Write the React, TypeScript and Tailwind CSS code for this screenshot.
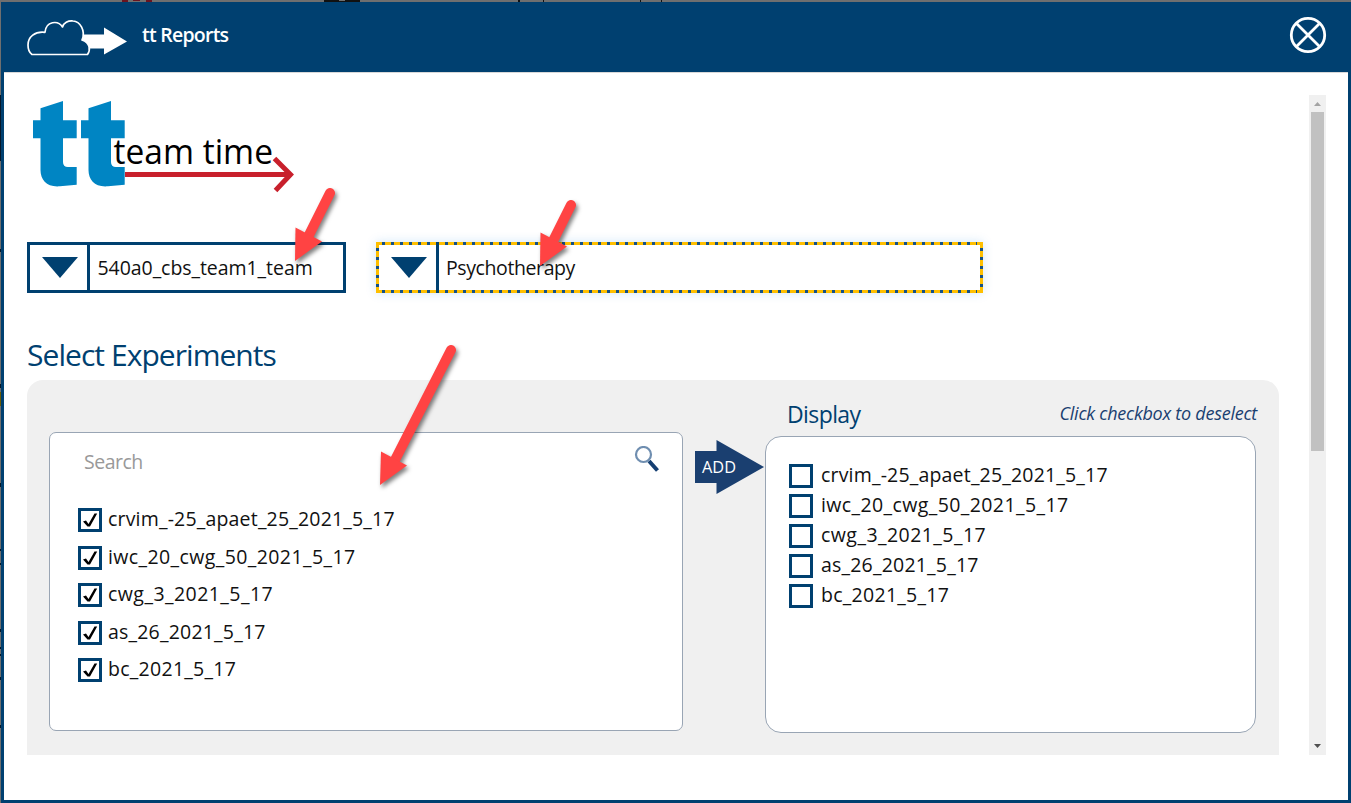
import React from "react";

const experiments = [
  { name: "crvim_-25_apaet_25_2021_5_17", track: "tracking-[0.18px]" },
  { name: "iwc_20_cwg_50_2021_5_17", track: "tracking-[0.4px]" },
  { name: "cwg_3_2021_5_17", track: "tracking-[0.45px]" },
  { name: "as_26_2021_5_17", track: "tracking-[0.2px]" },
  { name: "bc_2021_5_17", track: "tracking-[0.27px]" },
];

function CloudArrow() {
  return (
    <svg className="block h-[38px] w-[101px] shrink-0" viewBox="26 19 101 38">
      <path d="M83 34.500H104V27.500L127 41.500L104 54.500V48.500H83Z" fill="#fff" />
      <path
        d="M32 54.500H87.500C90.500 50 90.500 43 82 40C86 31 80 21.200 73 21C68 20.500 63.500 23 62.500 27C58 20 46 21 45 32.300C35 31 28 37 28 45C28 49 29 52.500 32 54.500Z"
        fill="#004070"
        stroke="#fff"
        strokeWidth="1.7"
        strokeLinejoin="round"
      />
    </svg>
  );
}

function TeamTimeLogo() {
  const t =
    "M40.500 108.300L63 101V120.300H76.700V138.300H63V162Q63 167 68 167H76.700V184.800L60 186.300C47 187.500 40.500 180 40.500 170V138.300H33V120.300H40.500Z";
  return (
    <svg className="block h-[94px] w-[264px]" viewBox="32 99 264 94">
      <path d={t} fill="#0085c3" />
      <path d={t} fill="#0085c3" transform="translate(48 0)" />
      <path d="M125 174.500H290M274.500 158.500L290.500 174.500L275.500 190.500" fill="none" stroke="#c8202c" strokeWidth="5" />
      <text x="113.500" y="163.500" fontSize="35.500" textLength="159.500" lengthAdjust="spacingAndGlyphs" fontFamily="Open Sans, sans-serif">
        team time
      </text>
    </svg>
  );
}

function Triangle() {
  return (
    <svg className="block h-[21px] w-9" viewBox="0 0 36 21">
      <path d="M0 0H36L18 21Z" fill="#004070" />
    </svg>
  );
}

function Box({ checked }: { checked?: boolean }) {
  return (
    <span className="block size-6 shrink-0 border-[3px] border-[#004070] bg-white">
      {checked && (
        <svg className="block size-[18px]" viewBox="0 0 18 18">
          <path d="M2 10.500L5 9.500L7.500 13L13.500 2.500H16.200L9 15.500H6.500Z" fill="#000" />
        </svg>
      )}
    </span>
  );
}

function RedArrow({ className, w, h, body, head }: { className: string; w: number; h: number; body: string; head: string }) {
  return (
    <svg className={className} viewBox={`0 0 ${w} ${h}`}>
      <g className="drop-shadow-[2px_3px_2px_rgba(0,0,0,0.5)]">
        <path d={body} stroke="#ff4343" strokeWidth="10" strokeLinecap="round" />
        <path d={head} fill="#ff4343" />
      </g>
    </svg>
  );
}

function DimmedPage() {
  return (
    <svg className="absolute inset-0 h-[803px] w-[1351px]" viewBox="0 0 1351 803">
      <path d="M122 0H128V2H122ZM133 0H140V1H133ZM146 0H152V2H146Z" fill="#6a1420" />
      <path d="M324 0H339V1H345V0H360V2H324ZM518 0H520V2H518ZM543 0H544V2H543ZM640 0H641V2H640ZM661 0H662V2H661Z" fill="#111" />
      <path d="M0 95H1V161H0ZM0 249H1V252H0ZM0 384H1V388H0ZM0 483H1V487H0ZM0 549H1V551H0ZM0 563H1V565H0ZM0 629H1V632H0ZM0 647H1V649H0ZM0 654H1V656H0ZM0 677H1V680H0ZM0 725H1V728H0Z" fill="#06182a" />
      <path d="M0 392H1V406H0Z" fill="#6b5a00" />
    </svg>
  );
}

export default function App() {
  return (
    <div className="relative flex h-[803px] w-[1351px] flex-col overflow-hidden bg-[#6f6f6f] pt-[2px] pl-px font-['Open_Sans',sans-serif] text-[19.500px] text-[#111]">
      <DimmedPage />
      <div className="relative flex h-[801px] w-[1350px] flex-col border-[3px] border-t-0 border-[#004070] bg-white">
        <header className="flex h-[70px] shrink-0 bg-[#004070] pt-[17px] pl-[22px]">
          <CloudArrow />
          <h1 className="ml-[15px] pt-px text-[19.500px] leading-[30px] font-semibold tracking-[-0.75px] text-white">tt Reports</h1>
          <svg className="mr-[21px] -mt-[3px] ml-auto size-[38px]" viewBox="0 0 38 38" fill="none" stroke="#fff" strokeWidth="2.800">
            <circle cx="19" cy="19" r="16.700" />
            <path d="M7.500 7.500L30.500 30.500M30.500 7.500L7.500 30.500" />
          </svg>
        </header>
        <div className="flex h-[683px] shrink-0 border-t border-[#d8d8d8] pl-[23px]">
          <main className="w-[1252px] pt-[26px]">
            <div className="pl-[5px]">
              <TeamTimeLogo />
            </div>
            <div className="mt-[49px] flex gap-[30px]">
              <div className="flex h-[51px] w-[319px] border-[3px] border-[#004070]">
                <div className="flex w-[60px] justify-center border-r-[3px] border-[#004070] pt-3 pl-[3px]">
                  <Triangle />
                </div>
                <span className="pl-[7.500px] leading-[46px] tracking-[-0.06px]">540a0_cbs_team1_team</span>
              </div>
              <div className="relative flex h-[51px] w-[607px] p-[3px] shadow-[0_0_10px_rgba(0,120,215,0.18)]">
                <svg className="absolute inset-0 h-[51px] w-[607px]" viewBox="0 0 607 51" fill="none">
                  <rect x="1.500" y="1.500" width="604" height="48" stroke="#ffbf00" strokeWidth="3" />
                  <path d="M6 1.500H601M6 49.500H601" stroke="#145087" strokeWidth="3" strokeDasharray="3 6" />
                  <path d="M1.500 6V47M605.500 6V47" stroke="#145087" strokeWidth="3" strokeDasharray="3 6" />
                </svg>
                <div className="relative -my-[3px] flex w-[60px] justify-center border-r-[3px] border-[#004070] pt-[15px] pl-[3px]">
                  <Triangle />
                </div>
                <span className="pl-[7px] leading-[46px] tracking-[-0.4px]">Psychotherapy</span>
              </div>
            </div>
            <h2 className="mt-[39px] h-[48px] text-[30px] leading-[46px] tracking-[-0.95px] text-[#004070]">Select Experiments</h2>
            <section className="flex h-[375px] rounded-t-2xl bg-[#f0f0f0] pl-[22px]">
              <div className="mt-[52px] h-[299px] w-[634px] rounded-[7px] border border-[#99a5b4] bg-white">
                <div className="flex h-[75px] justify-between pt-[13px] pr-[21px] pl-[34px]">
                  <span className="leading-[31px] tracking-[-0.5px] text-[#999]">Search</span>
                  <svg className="size-[28px]" viewBox="0 0 28 28" fill="none">
                    <path d="M16 15L24.500 24.500" stroke="#153f72" strokeWidth="4" />
                    <circle cx="10.500" cy="8.500" r="7.500" stroke="#6f8eb0" strokeWidth="2.200" />
                  </svg>
                </div>
                <ul className="flex flex-col gap-[13.500px] pl-[28px]">
                  {experiments.map((e) => (
                    <li key={e.name} className="flex h-6 gap-[6px]">
                      <Box checked />
                      <span className={`leading-[22px] ${e.track}`}>{e.name}</span>
                    </li>
                  ))}
                </ul>
              </div>
              <div className="mt-[60px] ml-[12px] h-[54px] w-[69px]">
                <svg className="block h-[54px] w-[69px]" viewBox="0 0 69 54">
                  <path d="M0 11H21.500V0L69 27L21.500 54V43H0Z" fill="#1a3f70" />
                  <text x="7" y="32.500" fontSize="16.500" textLength="34" lengthAdjust="spacingAndGlyphs" fill="#fff" fontFamily="Open Sans, sans-serif">
                    ADD
                  </text>
                </svg>
              </div>
              <div className="ml-px w-[491px] pt-[18px]">
                <div className="flex h-[38px] justify-between pl-[22px] text-[#004070]">
                  <h3 className="text-[23px] leading-[33px] tracking-[-0.6px]">Display</h3>
                  <span className="-mr-[1px] text-[18px] leading-[30px] tracking-[-0.25px] text-[#1a3f70] italic">Click checkbox to deselect</span>
                </div>
                <ul className="flex h-[297px] flex-col gap-[6px] rounded-2xl border border-[#99a5b4] bg-white pt-[27px] pl-[23px]">
                  {experiments.map((e) => (
                    <li key={e.name} className="flex h-6 gap-[8px]">
                      <Box />
                      <span className={`leading-[22px] ${e.track}`}>{e.name}</span>
                    </li>
                  ))}
                </ul>
              </div>
            </section>
          </main>
          <div className="mt-[22px] ml-[30px] flex h-[660px] w-[17px] flex-col items-center bg-[#f0f0f0]">
            <svg className="h-[17px] w-[17px] shrink-0" viewBox="0 0 17 17"><path d="M5 11L8.500 7L12 11Z" fill="#a3a3a3" /></svg>
            <div className="h-[339px] w-[13px] bg-[#c1c1c1]" />
            <svg className="mt-auto h-[17px] w-[17px] shrink-0" viewBox="0 0 17 17"><path d="M5 6L8.500 10L12 6Z" fill="#505050" /></svg>
          </div>
        </div>
      </div>
      <RedArrow className="absolute top-[180px] left-[285px] h-[100px] w-[60px]" w={60} h={100} body="M45 13L24 55" head="M10.500 47.500L37 61.500L10 81Z" />
      <RedArrow className="absolute top-[192px] left-[530px] h-[90px] w-[60px]" w={60} h={90} body="M41 13L22 51" head="M10.500 40.500L37 54.500L10 74Z" />
      <RedArrow className="absolute top-[335px] left-[365px] h-[170px] w-[105px]" w={105} h={170} body="M86 15L30 125" head="M16 116.500L42 130.500L15 150Z" />
    </div>
  );
}
